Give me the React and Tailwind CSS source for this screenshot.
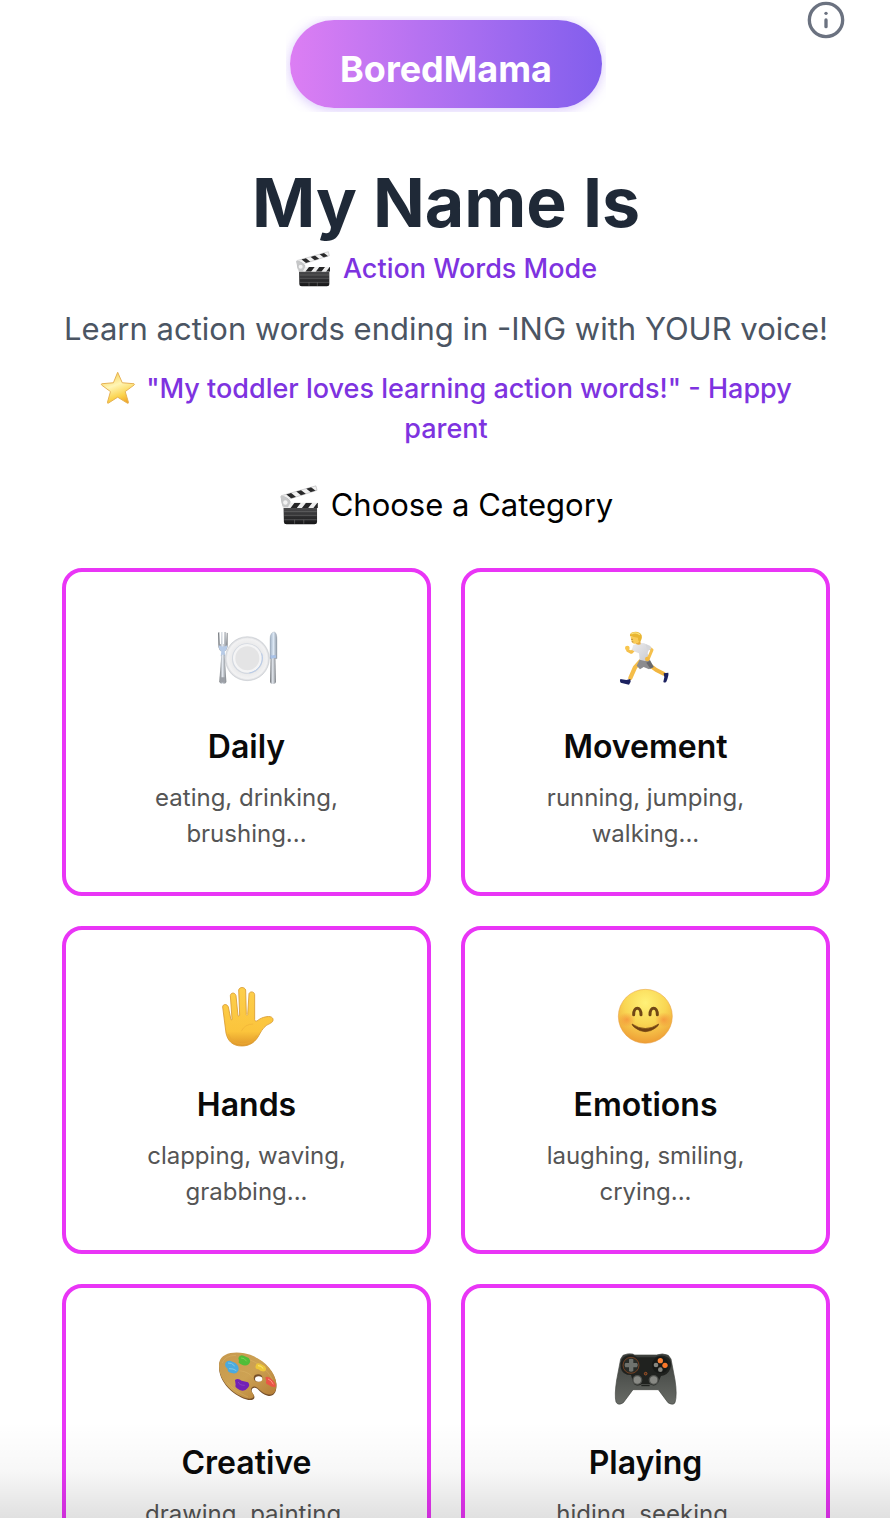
import React from "react";
import { Info } from "lucide-react";

function Clapper({ className }) {
  return (
    <svg viewBox="72 26 108 114" className={className} aria-hidden="true">
      <defs>
        <linearGradient id="slate" x1="0" y1="0" x2="0" y2="1">
          <stop offset="0" stopColor="#4a4a4c" />
          <stop offset="1" stopColor="#161617" />
        </linearGradient>
        <clipPath id="clap-top"><path d="M77 58 172 31 175 43 84 72Z" /></clipPath>
        <clipPath id="clap-low"><path d="M82 77H177V91H82Z" /></clipPath>
      </defs>
      <path d="M77 58 172 31 175 43 84 72Z" fill="#f1f1f1" />
      <g clipPath="url(#clap-top)" fill="#29292a">
        <path d="M91 54 104 50 119 62 106 66ZM118 46 131 42 146 54 133 58ZM145 38 158 34 173 46 160 50Z" />
      </g>
      <path d="M77 58 172 31 175 43 100 67" fill="none" stroke="#8d8d8f" strokeWidth="1" />
      <path d="M76 60C80 56 97 63 103 73L97 91H84C78 83 78 70 76 60Z" fill="#b9babc" />
      <path d="M82 77H177V91H82Z" fill="#eee" />
      <g clipPath="url(#clap-low)" fill="#252526">
        <path d="M103 91 114 77H131L120 91ZM134 91 145 77H162L151 91ZM165 91 176 77H190V91Z" />
      </g>
      <path d="M76 60C80 56 97 63 103 76L96 89H84C79 80 79 70 76 60Z" fill="#c6c7c8" />
      <circle cx="89" cy="76" r="6" fill="#f3f3f3" />
      <path d="M84 91H175V129Q175 135 168 135H92Q85 135 85 129Z" fill="url(#slate)" />
      <path d="M86 101H174M86 111H174M86 123H174M114 123V134M139 123V134" stroke="#727274" strokeWidth="1.6" />
    </svg>
  );
}

function Star({ className }) {
  return (
    <svg viewBox="43 29 110 108" className={className} aria-hidden="true">
      <defs>
        <linearGradient id="star-fill" x1="0.3" y1="0" x2="0.7" y2="1">
          <stop offset="0" stopColor="#f6cf52" />
          <stop offset="0.4" stopColor="#fff5b5" />
          <stop offset="0.75" stopColor="#fbd34c" />
          <stop offset="1" stopColor="#f0a426" />
        </linearGradient>
      </defs>
      <path
        d="M97 35 111 67 147 70Q150 72 147 74L120 94 130 127Q130 131 126 129L97 111 69 129Q65 131 66 126L75 94 48 74Q45 71 49 70L84 67Z"
        fill="url(#star-fill)" stroke="#e5b052" strokeWidth="3" strokeLinejoin="round"
      />
    </svg>
  );
}

function Plate() {
  return (
    <svg viewBox="2 4 270 255" className="h-[85px] w-[90px]" aria-hidden="true">
      <defs>
        <linearGradient id="steel" x1="0" x2="1">
          <stop offset="0" stopColor="#6f7378" />
          <stop offset="0.45" stopColor="#e2e7ee" />
          <stop offset="1" stopColor="#7c8085" />
        </linearGradient>
        <linearGradient id="blade" x1="0" x2="1">
          <stop offset="0" stopColor="#9fb0c4" />
          <stop offset="0.5" stopColor="#dbe7f4" />
          <stop offset="1" stopColor="#8e98a4" />
        </linearGradient>
        <radialGradient id="plate-rim">
          <stop offset="0.65" stopColor="#e9e9ea" />
          <stop offset="0.9" stopColor="#f2f2f3" />
          <stop offset="1" stopColor="#d3d5d9" />
        </radialGradient>
      </defs>
      <circle cx="138" cy="132" r="66" fill="url(#plate-rim)" stroke="#c3c7cd" strokeWidth="1.5" />
      <circle cx="138" cy="132" r="46" fill="#d3d8e0" />
      <circle cx="138" cy="131" r="43" fill="#f4f4f5" />
      <circle cx="138" cy="131" r="36" fill="#e4e4e5" />
      <path d="M181 116C190 142 172 170 144 175" fill="none" stroke="#b7cbe9" strokeWidth="3" />
      <path d="M50 54 54 52 56 88H59L60 52H64L65 88H68L69 52H73L74 88 76 54 79 55V91Q79 105 69 111L60 111Q51 105 51 91Z" fill="url(#steel)" />
      <path d="M52 92Q65 99 78 92Q78 105 70 110L72 125H58L60 110Q52 105 52 92Z" fill="#b7cbe7" />
      <path d="M60 120H70L75 200Q75 208 65 208T54 200Z" fill="url(#steel)" />
      <path d="M59 188H71V204H58Z" fill="#9ca0a7" />
      <path d="M206 132V72Q207 52 219 52Q227 54 227 76V132Z" fill="url(#blade)" stroke="#96a1ae" />
      <path d="M208 122H222L224 200Q224 208 215 208T206 200Z" fill="url(#steel)" />
      <path d="M207 122H224V129L208 132Z" fill="#a8c2e8" />
    </svg>
  );
}

function Runner() {
  return (
    <svg viewBox="2 4 270 255" className="h-[85px] w-[90px]" aria-hidden="true">
      <defs>
        <linearGradient id="shirt" x1="0" y1="0" x2="1" y2="1">
          <stop offset="0" stopColor="#ececef" />
          <stop offset="1" stopColor="#cacbd0" />
        </linearGradient>
      </defs>
      <path d="M120 140 104 158 90 190" fill="none" stroke="#f5bd48" strokeWidth="13" strokeLinecap="round" strokeLinejoin="round" />
      <path d="M146 150 168 166 190 177" fill="none" stroke="#f2b640" strokeWidth="12" strokeLinecap="round" />
      <path d="M60 193 78 196 90 193 91 201 86 210 61 204Q57 199 60 193Z" fill="#1c2260" />
      <path d="M190 176 204 174Q206 182 198 201 192 206 189 201L192 188Z" fill="#1c2260" />
      <path d="M119 133 149 136 160 157 146 164 130 157 119 164 109 153Z" fill="#8b8b8e" />
      <path d="M138 144 150 162 160 157 149 138Z" fill="#68686b" />
      <path d="M104 102 93 113 82 107 81 100" fill="none" stroke="#f5c04c" strokeWidth="9" strokeLinecap="round" strokeLinejoin="round" />
      <path d="M98 92Q113 83 132 86L148 97 142 116 147 134 134 139 118 135 116 116 104 111 95 106Z" fill="url(#shirt)" />
      <path d="M146 99 155 106 144 132" fill="none" stroke="#f5c04c" strokeWidth="9" strokeLinecap="round" strokeLinejoin="round" />
      <path d="M135 87 150 94 153 103 142 108Z" fill="#d5d6da" />
      <circle cx="81" cy="100" r="7" fill="#f8c64e" />
      <circle cx="141" cy="133" r="7" fill="#f3b83f" />
      <path d="M105 76H120L121 89Q113 92 106 87Z" fill="#e8ab3c" />
      <path d="M91 66 117 62 120 78Q113 88 101 87 92 84 91 66Z" fill="#f9cb58" />
      <path d="M89 65Q87 54 100 52 118 49 124 62 127 74 117 83 112 78 113 69 101 70Z" fill="#e9b632" />
      <path d="M93 58Q106 50 119 60" fill="none" stroke="#fae17a" strokeWidth="4" />
      <circle cx="95" cy="74" r="1.5" fill="#5b3d1e" />
      <path d="M94 81 99 82" stroke="#8d4f1e" strokeWidth="1.5" />
    </svg>
  );
}

function Hand() {
  return (
    <svg viewBox="2 -5 270 255" className="h-[85px] w-[90px]" aria-hidden="true">
      <defs>
        <linearGradient id="skin" x1="0" y1="0" x2="0" y2="1">
          <stop offset="0" stopColor="#fdcf4c" />
          <stop offset="0.75" stopColor="#fbc43c" />
          <stop offset="1" stopColor="#df962a" />
        </linearGradient>
      </defs>
      <path
        d="M64 94C64 84 78 84 81 94L89 132Q92 134 92 130L87 60C88 50 101 49 104 60L110 120Q113 123 115 119L112 43C114 33 130 33 133 43L135 117Q137 121 139 117L143 54C146 46 159 47 160 57L160 132Q161 139 167 136C177 127 194 121 207 123 218 126 218 138 207 143 191 149 183 160 175 175 162 201 144 211 121 211 94 211 79 196 74 172Z"
        fill="url(#skin)" stroke="#d99a30" strokeWidth="2.5"
      />
      <path d="M81 176Q91 204 123 205 151 204 166 179" fill="none" stroke="#e9a934" strokeWidth="4" opacity=".65" />
      <path d="M120 167Q130 145 156 145" fill="none" stroke="#eeb038" strokeWidth="3" opacity=".65" />
    </svg>
  );
}

function Smile() {
  return (
    <svg viewBox="2 -5 270 255" className="h-[85px] w-[90px]" aria-hidden="true">
      <defs>
        <radialGradient id="face" cx=".5" cy=".25" r=".78">
          <stop offset="0" stopColor="#fff178" />
          <stop offset=".5" stopColor="#f9d653" />
          <stop offset="1" stopColor="#ed9832" />
        </radialGradient>
        <radialGradient id="blush">
          <stop offset="0" stopColor="#f47e34" stopOpacity=".6" />
          <stop offset="1" stopColor="#f47e34" stopOpacity="0" />
        </radialGradient>
      </defs>
      <circle cx="135" cy="122" r="81" fill="url(#face)" stroke="#e69b3d" strokeWidth="1.5" />
      <ellipse cx="80" cy="132" rx="26" ry="22" fill="url(#blush)" />
      <ellipse cx="190" cy="132" rx="26" ry="22" fill="url(#blush)" />
      <path d="M100 117C100 91 122 91 122 117M149 117C149 91 171 91 171 117" fill="none" stroke="#704716" strokeWidth="9" strokeLinecap="round" />
      <path d="M95 145Q135 172 175 145 174 150 168 155 135 181 102 155 96 150 95 145Z" fill="#704112" stroke="#704112" strokeWidth="2" strokeLinejoin="round" />
    </svg>
  );
}

function Palette() {
  return (
    <svg viewBox="2 -11 270 255" className="h-[85px] w-[90px]" aria-hidden="true">
      <defs>
        <linearGradient id="wood" x1="0" y1="0" x2="1" y2="1">
          <stop offset="0" stopColor="#c7994e" />
          <stop offset=".5" stopColor="#cda253" />
          <stop offset="1" stopColor="#b27a34" />
        </linearGradient>
      </defs>
      <path d="M54 83C59 58 93 48 129 55 177 64 220 103 225 145 227 170 216 184 199 180 187 178 178 169 168 159 159 153 150 157 151 167 153 175 163 180 158 189 148 201 110 184 89 165 65 143 49 114 54 83Z" fill="#76502b" />
      <path d="M54 80C59 55 93 46 129 53 177 62 220 100 225 142 227 167 216 180 199 176 187 174 178 165 168 156 157 149 148 154 149 164 151 172 161 177 156 185 146 197 110 181 89 162 65 140 49 111 54 80Z" fill="url(#wood)" />
      <ellipse cx="170" cy="127" rx="13" ry="11" fill="#76502b" />
      <ellipse cx="172" cy="130" rx="11" ry="8" fill="#ffffff" />
      <path d="M63 82Q70 60 104 59M78 140Q98 166 140 184M137 69Q190 87 214 132M115 105Q145 109 156 128" fill="none" stroke="#deb969" strokeWidth="2" opacity=".6" />
      <path d="M72 83Q75 74 86 75L102 82Q115 92 111 105 104 117 91 112 78 110 79 99 69 93 72 83Z" fill="#4aaade" />
      <path d="M80 82Q91 80 100 91M83 99Q96 98 105 105" fill="none" stroke="#7ecbea" strokeWidth="3" />
      <path d="M111 67Q115 56 127 60L142 67Q151 77 142 86 132 93 119 86 109 82 113 76Z" fill="#4fbd38" />
      <path d="M119 67Q129 66 136 77" fill="none" stroke="#79d351" strokeWidth="3" />
      <path d="M163 90Q165 80 177 84L191 92Q198 103 190 107 178 109 171 101 160 99 163 90Z" fill="#edc638" />
      <path d="M170 90Q179 89 186 99" fill="none" stroke="#ffea78" strokeWidth="3" />
      <path d="M192 125Q201 120 211 131 224 143 223 153 212 157 202 148 190 144 195 136Z" fill="#eb5546" />
      <path d="M200 130Q211 134 216 146" fill="none" stroke="#ff9482" strokeWidth="3" />
      <path d="M101 133Q110 126 121 135L140 140Q148 149 139 157 130 169 115 163 98 154 103 148Z" fill="#7321b5" />
      <path d="M111 139Q113 149 130 149" fill="none" stroke="#8a3fc6" strokeWidth="3" />
    </svg>
  );
}

function Gamepad() {
  return (
    <svg viewBox="2 -11 270 255" className="h-[85px] w-[90px]" aria-hidden="true">
      <defs>
        <linearGradient id="pad" x1="0" y1="0" x2="0" y2="1">
          <stop offset="0" stopColor="#3a3d3a" />
          <stop offset="1" stopColor="#686b66" />
        </linearGradient>
      </defs>
      <path d="M68 59Q82 52 97 55L103 58H169Q186 51 204 59L212 70 224 133Q231 178 224 201 218 210 203 201L174 162H98L69 201Q53 211 47 199 42 178 49 133L61 70Z" fill="url(#pad)" stroke="#424541" strokeWidth="2" />
      <path d="M65 70Q79 54 100 59L111 65H164Q183 54 204 66 218 79 209 101 202 119 182 121L174 140Q164 155 149 146H124Q105 156 98 139L92 118Q66 118 61 96Q59 80 65 70Z" fill="#20221f" />
      <circle cx="92" cy="89" r="24" fill="#292c28" stroke="#9b4e22" strokeWidth="2" />
      <path d="M86 71Q92 67 99 71V82H110Q115 88 110 95H99V106Q92 110 86 106V95H75Q70 89 75 82H86Z" fill="#6f726d" />
      <circle cx="180" cy="88" r="25" fill="#171917" />
      <circle cx="180" cy="75" r="8" fill="#fa8034" />
      <circle cx="194" cy="89" r="8" fill="#fa7729" />
      <circle cx="167" cy="88" r="7" fill="#858680" />
      <circle cx="180" cy="102" r="7" fill="#858680" />
      <circle cx="111" cy="133" r="15" fill="#4f514d" />
      <circle cx="111" cy="133" r="11" fill="#888984" />
      <circle cx="160" cy="133" r="15" fill="#4f514d" />
      <circle cx="160" cy="133" r="11" fill="#888984" />
      <circle cx="136" cy="114" r="4" fill="#452d20" stroke="#cc672c" strokeWidth="2" />
      <path d="M123 150H148" stroke="#171917" strokeWidth="3" />
    </svg>
  );
}

const categories = [
  { name: "Daily", words: ["eating, drinking,", "brushing..."], Icon: Plate },
  { name: "Movement", words: ["running, jumping,", "walking..."], Icon: Runner },
  { name: "Hands", words: ["clapping, waving,", "grabbing..."], Icon: Hand },
  { name: "Emotions", words: ["laughing, smiling,", "crying..."], Icon: Smile },
  { name: "Creative", words: ["drawing, painting,", "building..."], Icon: Palette },
  { name: "Playing", words: ["hiding, seeking,", "sliding..."], Icon: Gamepad },
];

export default function App() {
  return (
    <div className="relative h-screen overflow-hidden bg-white font-['Inter','Liberation_Sans',sans-serif] text-black">
      <button type="button" aria-label="Information" className="absolute top-0 right-11 text-[#6b7280]">
        <Info className="size-10" strokeWidth={2} />
      </button>
      <main className="pt-4 pr-[60px] pl-[62px]">
        <header className="flex flex-col items-center text-center">
          <div className="overflow-hidden p-1">
            <a href="#home" className="flex h-[88px] w-[312px] items-center justify-center rounded-full bg-linear-to-r from-[#dc7ef3] to-[#825eed] pt-2.5 text-4xl font-bold text-white shadow-[0_2px_12px_rgba(139,92,246,0.35)]">
              BoredMama
            </a>
          </div>
          <h1 className="mt-[50px] text-[68px] leading-[80px] font-bold text-[#1f2937]">My Name Is</h1>
          <p className="mt-[7px] flex items-center gap-3 text-[27px] leading-10 font-medium text-[#7e33e0]">
            <Clapper className="h-[38px] w-9" />
            Action Words Mode
          </p>
          <p className="mt-4 text-[31px] leading-[48px] whitespace-nowrap text-[#4b5563]">
            Learn action words ending in -ING with YOUR voice!
          </p>
          <p className="mt-4 text-[27px] leading-10 font-medium text-[#7e33e0]">
            <Star className="mr-2.5 inline-block h-9 w-9 align-[-8px]" />
            "My toddler loves learning action words!" - Happy
            <br />
            parent
          </p>
        </header>
        <section>
          <h2 className="mt-8 flex items-center justify-center gap-3 text-[31px] leading-[48px]">
            <Clapper className="h-[42px] w-10" />
            Choose a Category
          </h2>
          <div className="mt-[39px] grid grid-cols-2 gap-[30px]">
            {categories.map(({ name, words, Icon }) => (
              <button
                key={name}
                type="button"
                className="flex flex-col items-center rounded-[20px] border-4 border-[#e935f6] bg-white px-6 py-10 text-center"
              >
                <span className="flex h-[92px] items-center justify-center">
                  <Icon />
                </span>
                <span className="mt-[19px] text-[32px] leading-[48px] font-semibold text-[#0a0a0a]">{name}</span>
                <span className="mt-[9px] text-[24px] leading-9 text-[#555555]">
                  {words[0]}
                  <br />
                  {words[1]}
                </span>
              </button>
            ))}
          </div>
        </section>
      </main>
      <div className="pointer-events-none absolute inset-x-0 bottom-0 h-24 bg-linear-to-b from-transparent via-black/3 to-black/12" />
    </div>
  );
}
